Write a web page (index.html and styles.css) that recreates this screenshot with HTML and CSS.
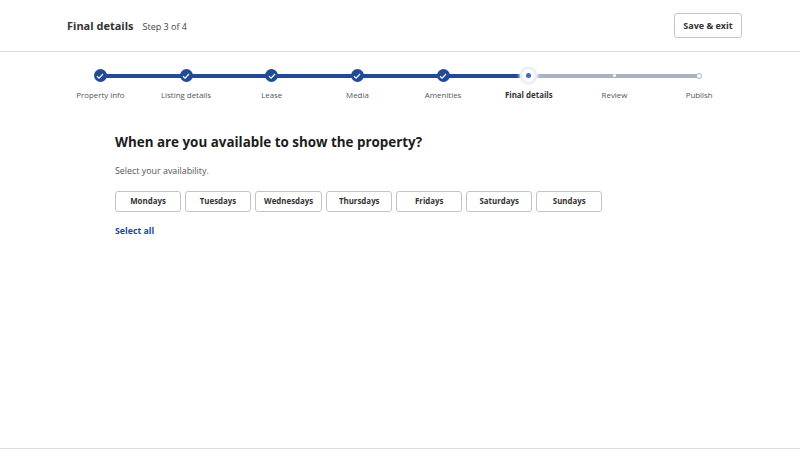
FILE: index.html
```html
<!DOCTYPE html>
<html lang="en">
<head>
    <meta charset="UTF-8">
    <meta name="viewport" content="width=device-width, initial-scale=1.0">
    <title>Final details</title>
    <link rel="stylesheet" href="styles.css">
</head>
<body>

    <header class="top-bar">
        <div class="top-title">
            <h1>Final details</h1>
            <span class="step-count">Step 3 of 4</span>
        </div>
        <button type="button" class="btn-save">Save &amp; exit</button>
    </header>

    <ol class="stepper">
        <li class="step done">
            <span class="dot"><svg viewBox="0 0 12 12"><path d="M3 6.3 5.1 8.2 9 4"/></svg></span>
            <span class="step-label">Property info</span>
        </li>
        <li class="step done">
            <span class="dot"><svg viewBox="0 0 12 12"><path d="M3 6.3 5.1 8.2 9 4"/></svg></span>
            <span class="step-label">Listing details</span>
        </li>
        <li class="step done">
            <span class="dot"><svg viewBox="0 0 12 12"><path d="M3 6.3 5.1 8.2 9 4"/></svg></span>
            <span class="step-label">Lease</span>
        </li>
        <li class="step done">
            <span class="dot"><svg viewBox="0 0 12 12"><path d="M3 6.3 5.1 8.2 9 4"/></svg></span>
            <span class="step-label">Media</span>
        </li>
        <li class="step done">
            <span class="dot"><svg viewBox="0 0 12 12"><path d="M3 6.3 5.1 8.2 9 4"/></svg></span>
            <span class="step-label">Amenities</span>
        </li>
        <li class="step current">
            <span class="dot"></span>
            <span class="step-label">Final details</span>
        </li>
        <li class="step todo">
            <span class="dot"></span>
            <span class="step-label">Review</span>
        </li>
        <li class="step todo last">
            <span class="dot"></span>
            <span class="step-label">Publish</span>
        </li>
    </ol>

    <main class="content">
        <h2>When are you available to show the property?</h2>
        <p class="hint">Select your availability.</p>
        <div class="day-list">
            <button type="button" class="btn-day">Mondays</button>
            <button type="button" class="btn-day">Tuesdays</button>
            <button type="button" class="btn-day">Wednesdays</button>
            <button type="button" class="btn-day">Thursdays</button>
            <button type="button" class="btn-day">Fridays</button>
            <button type="button" class="btn-day">Saturdays</button>
            <button type="button" class="btn-day">Sundays</button>
        </div>
        <a href="#" class="select-all">Select all</a>
    </main>

    <footer class="bottom-bar"></footer>

</body>
</html>
```

FILE: styles.css
```css
* {
    box-sizing: border-box;
    margin: 0;
    padding: 0;
}

html, body {
    height: 100%;
}

body {
    font-family: "Open Sans", Arial, sans-serif;
    background-color: #fff;
    color: #333;
    display: flex;
    flex-direction: column;
    overflow: hidden;
}

button {
    font-family: inherit;
    background-color: #fff;
    cursor: pointer;
}

/* Top bar */
.top-bar {
    height: 52px;
    padding: 0 58px 1px 67px;
    border-bottom: 1px solid #dcdcdc;
    display: flex;
    justify-content: space-between;
    align-items: center;
    flex-shrink: 0;
}

.top-title {
    display: flex;
    align-items: baseline;
    gap: 9px;
}

.top-title h1 {
    font-size: 11px;
    font-weight: 700;
}

.step-count {
    font-size: 9px;
    color: #444;
}

.btn-save {
    width: 68px;
    height: 25px;
    border: 1px solid #c4c4c4;
    border-radius: 3px;
    font-size: 9px;
    font-weight: 700;
    color: #333;
}

/* Stepper */
.stepper {
    list-style: none;
    display: grid;
    grid-template-columns: repeat(8, 1fr);
    padding: 17px 57px 0 57.5px;
    flex-shrink: 0;
}

.step {
    position: relative;
    display: flex;
    flex-direction: column;
    align-items: center;
    gap: 7px;
}

/* segment running to the next step */
.step::after {
    content: "";
    position: absolute;
    top: 5px;
    left: 50%;
    width: 100%;
    height: 4px;
    background-color: #214a97;
}

.step.current::after,
.step.todo::after {
    background-color: #a9b3c1;
}

.step.last::after {
    display: none;
}

.dot {
    position: relative;
    z-index: 1;
    width: 13px;
    height: 13px;
    border-radius: 50%;
    background-color: #214a97;
    display: flex;
    justify-content: center;
    align-items: center;
}

.dot svg {
    width: 12px;
    height: 12px;
    fill: none;
    stroke: #fff;
    stroke-width: 1.2;
}

.step.current .dot {
    background-color: #fff;
    box-shadow: 0 0 0 2px #e9edf8, 0 0 3px 3px #f3f5fc;
}

.step.current .dot::before {
    content: "";
    width: 5px;
    height: 5px;
    border-radius: 50%;
    background-color: #3f66d4;
}

.step.todo .dot {
    background-color: transparent;
}

.step.todo .dot::before {
    content: "";
    width: 3px;
    height: 3px;
    border-radius: 50%;
    background-color: #fff;
}

.step.last .dot {
    transform: translateX(-1px);
}

.step.last .dot::before {
    width: 4px;
    height: 4px;
    background-color: #fff;
    border: 1px solid #a9b3c1;
}

.step.last .step-label {
    transform: translateX(-1px);
}

.step-label {
    font-size: 7.9px;
    line-height: 12px;
    color: #555;
}

.step.current .step-label {
    font-weight: 700;
    color: #333;
}

/* Main content */
.content {
    flex: 1;
    padding: 31px 0 0 115px;
}

.content h2 {
    font-size: 13.4px;
    line-height: 20px;
    font-weight: 700;
    color: #1c1c1c;
    margin-bottom: 12px;
}

.hint {
    font-size: 8.9px;
    line-height: 14px;
    color: #555;
    margin-bottom: 13px;
}

.day-list {
    display: flex;
    gap: 4px;
    margin-bottom: 12px;
}

.btn-day {
    min-width: 66px;
    height: 20.5px;
    padding: 0 8px;
    border: 1px solid #c4c4c4;
    border-radius: 3px;
    font-size: 7.9px;
    font-weight: 700;
    color: #333;
}

.select-all {
    display: block;
    font-size: 8.8px;
    line-height: 14px;
    font-weight: 700;
    color: #214a97;
    text-decoration: none;
}

.bottom-bar {
    height: 2px;
    border-top: 1px solid #dcdcdc;
    flex-shrink: 0;
}
```
